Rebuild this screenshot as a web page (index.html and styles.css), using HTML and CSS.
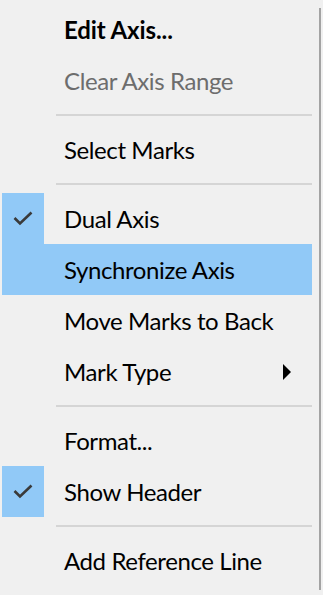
FILE: index.html
```html
<!DOCTYPE html>
<html>
<head>
<meta charset="utf-8">
<title>Axis menu</title>
<link rel="stylesheet" href="styles.css">
</head>
<body>

<!-- axis context menu -->
<div class="menu">
  <div class="item bold"><span class="icon"></span><span class="label">Edit Axis...</span></div>
  <div class="item disabled"><span class="icon"></span><span class="label">Clear Axis Range</span></div>
  <div class="sep"></div>
  <div class="item"><span class="icon"></span><span class="label">Select Marks</span></div>
  <div class="sep"></div>
  <div class="item checked">
    <span class="icon"><svg width="20" height="16" viewBox="0 0 20 16"><polyline points="1.5,7 7,12.5 18.5,1.5" /></svg></span>
    <span class="label">Dual Axis</span>
  </div>
  <div class="item hover"><span class="icon"></span><span class="label">Synchronize Axis</span></div>
  <div class="item"><span class="icon"></span><span class="label">Move Marks to Back</span></div>
  <div class="item"><span class="icon"></span><span class="label">Mark Type</span><span class="arrow"></span></div>
  <div class="sep"></div>
  <div class="item"><span class="icon"></span><span class="label">Format...</span></div>
  <div class="item checked">
    <span class="icon"><svg width="20" height="16" viewBox="0 0 20 16"><polyline points="1.5,7 7,12.5 18.5,1.5" /></svg></span>
    <span class="label">Show Header</span>
  </div>
  <div class="sep"></div>
  <div class="item"><span class="icon"></span><span class="label">Add Reference Line</span></div>
</div>

</body>
</html>
```

FILE: styles.css
```css
body {
	margin: 0;
	background: #f0f0f0;
	font-family: Lato, "Open Sans", sans-serif;
}

.menu {
	width: 310px;
	height: 582px;
	padding: 4px 7px 4px 2px;
	background: #f0f0f0;
	box-shadow: 4px 6px 0 -2px #a3a3a3;
	font-size: 24px;
	letter-spacing: -0.4px;
	color: #000;
}

.item {
	display: flex;
	align-items: center;
	height: 51px;
}

.icon {
	width: 42px;
	height: 100%;
	display: flex;
	align-items: center;
	justify-content: center;
	flex: none;
}

.icon svg polyline {
	fill: none;
	stroke: #3a3a3a;
	stroke-width: 2.6;
}

.label {
	margin-left: 20px;
	white-space: nowrap;
}

.bold .label {
	font-weight: bold;
	letter-spacing: -0.1px;
}

.disabled .label {
	color: #6d6d6d;
}

.checked .icon {
	background: #91c9f7;
}

.hover {
	background: #91c9f7;
}

.arrow {
	margin-left: auto;
	margin-right: 21px;
	border-left: 8px solid #000;
	border-top: 8px solid transparent;
	border-bottom: 8px solid transparent;
}

.sep {
	height: 18px;
	display: flex;
	align-items: center;
	padding-left: 54px;
}

.sep::after {
	content: "";
	flex: 1;
	height: 2px;
	background: #d5d5d5;
}
```
